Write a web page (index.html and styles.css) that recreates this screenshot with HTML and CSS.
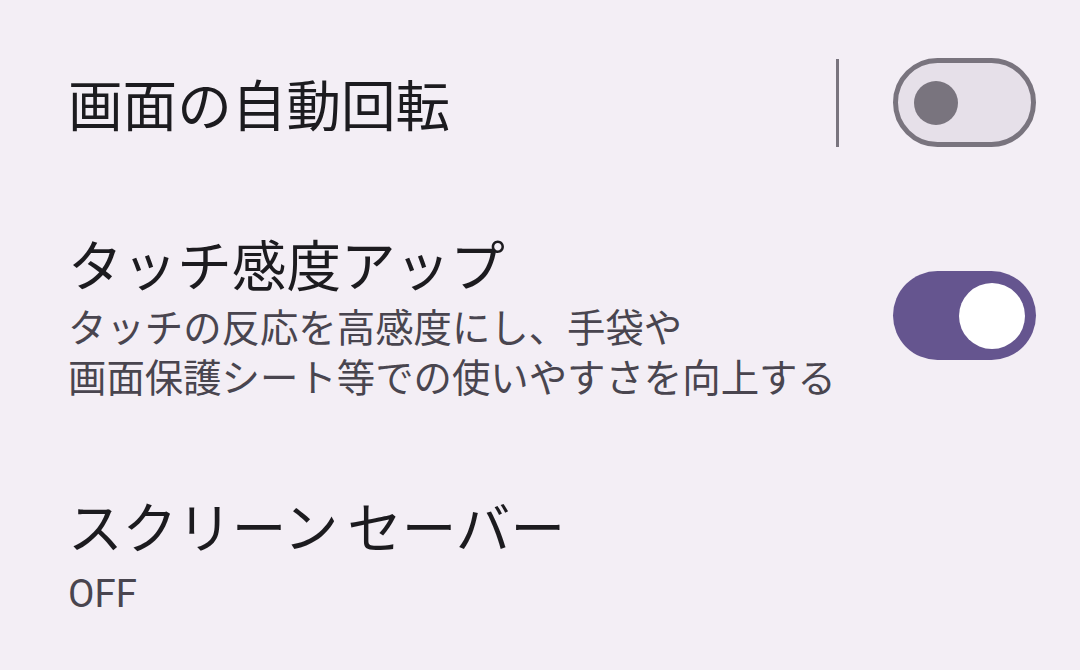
FILE: index.html
```html
<!DOCTYPE html>
<html lang="ja">
<head>
<meta charset="utf-8">
<link rel="stylesheet" href="styles.css">
</head>
<body>
<div class="list">
  <div class="item item-rotate">
    <div class="text">
      <div class="title">画面の自動回転</div>
    </div>
    <div class="divider"></div>
    <div class="switch off"><span class="thumb"></span></div>
  </div>
  <div class="item item-touch">
    <div class="text">
      <div class="title">タッチ感度アップ</div>
      <div class="summary">
        <div class="summary-line">タッチの反応を高感度にし、手袋や</div>
        <div class="summary-line">画面保護シート等での使いやすさを向上する</div>
      </div>
    </div>
    <div class="switch on"><span class="thumb"></span></div>
  </div>
  <div class="item item-saver">
    <div class="text">
      <div class="title">スクリーン<span class="gap"> </span>セーバー</div>
      <div class="summary summary-off">OFF</div>
    </div>
  </div>
</div>
</body>
</html>
```
FILE: styles.css
```css
html, body {
  margin: 0;
  padding: 0;
}
body {
  width: 1080px;
  height: 670px;
  overflow: hidden;
  background: #f3eef5;
  font-family: "Noto Sans CJK JP", "Noto Sans", sans-serif;
}
.list {
  display: flex;
  flex-direction: column;
}
.item {
  display: flex;
  align-items: center;
  padding: 0 44px 0 68px;
}
.item-rotate {
  height: 205px;
}
.item-touch {
  padding-top: 26px;
  padding-bottom: 0;
}
.item-saver {
  padding-top: 93px;
}
.text {
  flex: 1;
  min-width: 0;
}
.title {
  font-size: 54.6px;
  line-height: 64px;
  color: #1c1b1f;
}
.gap {
  font-size: 40px;
}
.summary {
  margin-top: 5px;
  font-size: 38.4px;
  line-height: 50px;
  color: #49454f;
}
.summary-line {
  height: 50px;
}
.summary-off {
  margin-top: 6px;
  font-family: "Roboto", "Noto Sans", sans-serif;
}
.divider {
  width: 3px;
  height: 88px;
  background: #79747e;
  margin-right: 54px;
}
.switch {
  box-sizing: border-box;
  width: 143px;
  height: 89px;
  border-radius: 45px;
  display: flex;
  align-items: center;
  flex-shrink: 0;
}
.switch.off {
  background: #e6e0e9;
  border: 5.5px solid #79747e;
  padding-left: 16px;
}
.switch.off .thumb {
  width: 44px;
  height: 44px;
  border-radius: 50%;
  background: #79747e;
}
.switch.on {
  background: #65558f;
  justify-content: flex-end;
  padding-right: 11px;
}
.switch.on .thumb {
  width: 66px;
  height: 66px;
  border-radius: 50%;
  background: #ffffff;
}
```
